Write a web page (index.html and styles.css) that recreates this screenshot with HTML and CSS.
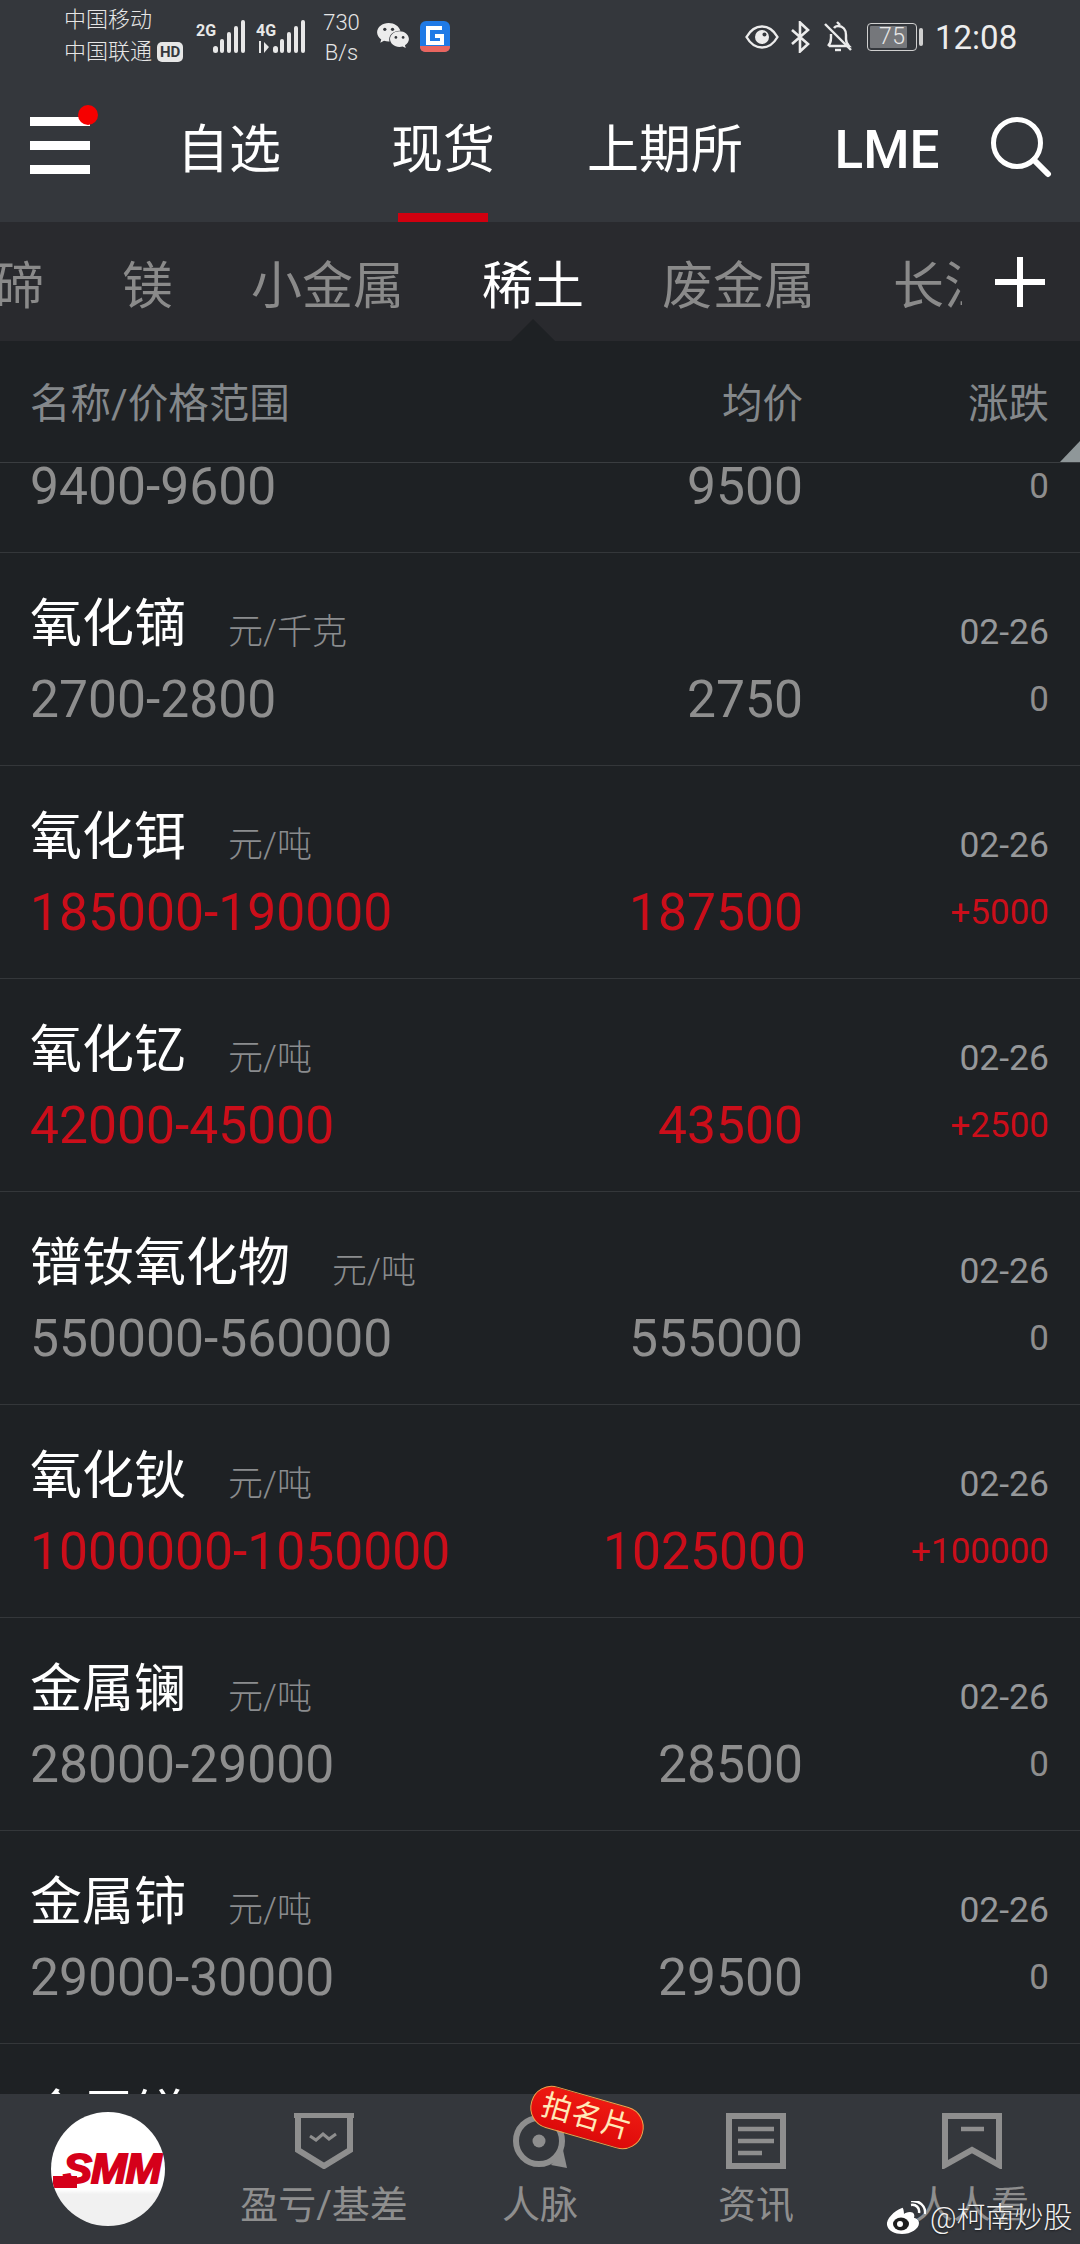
FILE: index.html
```html
<!DOCTYPE html>
<html lang="zh-CN">
<head>
<meta charset="utf-8">
<title>SMM 稀土</title>
<link rel="stylesheet" href="styles.css">
</head>
<body>
<div class="app">
  <header class="top">
    <div class="status">
      <div class="carriers">
        <div>中国移动</div>
        <div class="carrier2">中国联通<span class="hd">HD</span></div>
      </div>
      <svg class="signal" width="50" height="34" viewBox="0 0 50 34">
        <text x="0" y="16" class="net">2G</text>
        <g fill="#e8e8e8"><rect x="17" y="26" width="5" height="7" rx="2.5"/><rect x="24" y="19" width="4" height="14" rx="2"/><rect x="31" y="12" width="4" height="21" rx="2"/><rect x="38" y="6" width="4" height="27" rx="2"/><rect x="45" y="0" width="4" height="33" rx="2"/></g>
      </svg>
      <svg class="signal signal2" width="50" height="34" viewBox="0 0 50 34">
        <text x="0" y="16" class="net">4G</text>
        <g fill="#e8e8e8"><path d="M3 21v12h2V21zM8 33l5-6-5-5z"/><rect x="17" y="26" width="5" height="7" rx="2.5"/><rect x="24" y="19" width="4" height="14" rx="2"/><rect x="31" y="12" width="4" height="21" rx="2"/><rect x="38" y="6" width="4" height="27" rx="2"/><rect x="45" y="0" width="4" height="33" rx="2"/></g>
      </svg>
      <div class="speed"><div>730</div><div>B/s</div></div>
      <svg class="wechat" width="32" height="27" viewBox="0 0 33 28">
        <path fill="#ececec" d="M12 0C5.400 0 0 4.300 0 9.700c0 3 1.700 5.600 4.300 7.400L3.300 20.500l3.900-2c1.500.5 3 .8 4.800.8h.9a8 8 0 0 1-.3-2.200c0-5 4.800-9 10.800-9h.8C22.800 3.400 17.900 0 12 0z"/>
        <path fill="#ececec" d="M33 16.700c0-4.500-4.400-8.100-9.800-8.100s-9.800 3.600-9.800 8.100 4.400 8.100 9.800 8.100c1.200 0 2.300-.2 3.300-.5l3.200 1.700-.8-2.900c2.500-1.500 4.100-3.800 4.100-6.400z"/>
        <circle cx="8" cy="6.500" r="1.700" fill="#34373c"/><circle cx="16" cy="6.500" r="1.700" fill="#34373c"/><circle cx="19.500" cy="15" r="1.400" fill="#34373c"/><circle cx="27" cy="15" r="1.400" fill="#34373c"/>
      </svg>
      <svg class="gapp" width="30" height="31" viewBox="0 0 30 31">
        <rect width="30" height="31" rx="6" fill="#1f7ae6"/>
        <path d="M0 25h30v1a5 5 0 0 1-5 5H5a5 5 0 0 1-5-5z" fill="#e8655f"/>
        <path d="M22 7H8v15h14v-7h-7" fill="none" stroke="#fff" stroke-width="4"/>
      </svg>
      <div class="status-right">
        <svg class="eye" width="34" height="26" viewBox="0 0 34 26">
          <path d="M1.500 13C5.500 6 11 2.500 17 2.500S28.500 6 32.500 13C28.500 20 23 23.500 17 23.500S5.500 20 1.500 13z" fill="none" stroke="#ececec" stroke-width="2.400"/>
          <circle cx="17" cy="13" r="7" fill="#ececec"/><circle cx="19.500" cy="10.500" r="2" fill="#34373c"/>
        </svg>
        <svg class="bt" width="21" height="32" viewBox="0 0 21 32">
          <path d="M2 9l16 14-8 7.500V1.500l8 7.500L2 23" fill="none" stroke="#ececec" stroke-width="2.600"/>
        </svg>
        <svg class="bell" width="30" height="32" viewBox="0 0 30 32">
          <path d="M5 25c2-2 3-4 3-8v-4M11 7c1-1.500 2.500-2 4-2 5 0 8 3.500 8 9v4c0 3 1 5 3 7H6" fill="none" stroke="#ececec" stroke-width="2.400"/>
          <path d="M2 3l26 26" stroke="#ececec" stroke-width="2.400"/>
          <path d="M12 29h6" stroke="#ececec" stroke-width="2.400"/><path d="M14 1l3 3" stroke="#ececec" stroke-width="2.400"/>
        </svg>
        <div class="battery"><span class="battery-fill">75</span></div>
        <span class="battery-nub"></span>
        <span class="clock">12:08</span>
      </div>
    </div>
    <nav class="nav">
      <button class="menu" aria-label="菜单"><span></span><span></span><span></span><i class="menu-dot"></i></button>
      <a class="nav-item nav-a">自选</a>
      <a class="nav-item nav-b active">现货</a>
      <a class="nav-item nav-c">上期所</a>
      <a class="nav-item nav-d lme">LME</a>
      <svg class="search" width="62" height="62" viewBox="0 0 62 62">
        <circle cx="27" cy="27" r="23.500" fill="none" stroke="#fff" stroke-width="5"/>
        <path d="M44 44l14 14" stroke="#fff" stroke-width="6" stroke-linecap="round"/>
      </svg>
    </nav>
  </header>

  <section class="subtabs">
    <div class="strip">
      <a>碲</a><a>镁</a><a>小金属</a><a class="on">稀土</a><a>废金属</a><a>长江</a>
    </div>
    <svg class="plus" width="50" height="50" viewBox="0 0 50 50"><path d="M25 0v50M0 25h50" stroke="#fff" stroke-width="6"/></svg>
  </section>

  <div class="thead">
    <span class="th-name">名称/价格范围</span>
    <span class="th-avg">均价</span>
    <span class="th-chg">涨跌</span>
  </div>

  <main class="list">
    <article class="row row-clipped">
      <div class="range">9400-9600</div><div class="avg">9500</div><div class="chg">0</div>
    </article>
    <article class="row">
      <div class="name">氧化镝<small>元/千克</small></div><div class="date">02-26</div>
      <div class="range">2700-2800</div><div class="avg">2750</div><div class="chg">0</div>
    </article>
    <article class="row up">
      <div class="name">氧化铒<small>元/吨</small></div><div class="date">02-26</div>
      <div class="range">185000-190000</div><div class="avg">187500</div><div class="chg">+5000</div>
    </article>
    <article class="row up">
      <div class="name">氧化钇<small>元/吨</small></div><div class="date">02-26</div>
      <div class="range">42000-45000</div><div class="avg">43500</div><div class="chg">+2500</div>
    </article>
    <article class="row">
      <div class="name">镨钕氧化物<small>元/吨</small></div><div class="date">02-26</div>
      <div class="range">550000-560000</div><div class="avg">555000</div><div class="chg">0</div>
    </article>
    <article class="row up">
      <div class="name">氧化钬<small>元/吨</small></div><div class="date">02-26</div>
      <div class="range">1000000-1050000</div><div class="avg">1025000</div><div class="chg">+100000</div>
    </article>
    <article class="row">
      <div class="name">金属镧<small>元/吨</small></div><div class="date">02-26</div>
      <div class="range">28000-29000</div><div class="avg">28500</div><div class="chg">0</div>
    </article>
    <article class="row">
      <div class="name">金属铈<small>元/吨</small></div><div class="date">02-26</div>
      <div class="range">29000-30000</div><div class="avg">29500</div><div class="chg">0</div>
    </article>
    <article class="row">
      <div class="name">金属镁</div>
    </article>
  </main>

  <footer class="tabbar">
    <div class="tab tab-logo"><div class="logo"><span class="smm">SMM</span></div></div>
    <div class="tab">
      <svg class="tab-icon" width="62" height="56" viewBox="0 0 62 56">
        <path d="M1 0h60v5H1z" fill="#8e8e8e"/>
        <path d="M5 4v33l26 16 26-16V4" fill="none" stroke="#8e8e8e" stroke-width="6"/>
        <path d="M17 23l6 4 7-6 6 5 7-5" fill="none" stroke="#8e8e8e" stroke-width="3"/>
      </svg>
      <span>盈亏/基差</span>
    </div>
    <div class="tab tab-people">
      <svg class="tab-icon" width="62" height="56" viewBox="0 0 62 56">
        <circle cx="30" cy="28" r="23" fill="none" stroke="#8e8e8e" stroke-width="6"/>
        <path d="M42 52l16 3-4-18z" fill="#8e8e8e"/>
        <circle cx="30" cy="28" r="6.500" fill="#8e8e8e"/>
      </svg>
      <span>人脉</span>
      <div class="badge">拍名片</div>
    </div>
    <div class="tab">
      <svg class="tab-icon" width="62" height="56" viewBox="0 0 62 56">
        <rect x="4" y="3" width="54" height="50" fill="none" stroke="#8e8e8e" stroke-width="6"/>
        <path d="M13 16h36M13 28h36M13 40h24" stroke="#8e8e8e" stroke-width="4.500"/>
      </svg>
      <span>资讯</span>
    </div>
    <div class="tab">
      <svg class="tab-icon" width="62" height="56" viewBox="0 0 62 56">
        <path d="M4 52V3h54v49L31 37z" fill="none" stroke="#8e8e8e" stroke-width="6"/>
        <path d="M20 16h23" stroke="#8e8e8e" stroke-width="4.500"/>
      </svg>
      <span>人人看</span>
    </div>
    <div class="watermark">
      <svg width="40" height="34" viewBox="0 0 40 34">
        <path d="M16 7C8 10 0 18 1 24c1 6 8 9 15 9 9 0 17-5 17-11 0-4-4-5-5-5 1-3 0-6-4-6-3 0-5 1-6 2 0-3-1-7-2-6z" fill="#fff"/>
        <ellipse cx="15" cy="23" rx="8" ry="6.500" fill="#1d1d1d"/><circle cx="14" cy="23" r="3" fill="#fff"/>
        <path d="M25 4c5-1 9 3 8 8M25 0c8-1 15 5 14 13" fill="none" stroke="#fff" stroke-width="2.500"/>
      </svg>
      <span>@柯南炒股</span>
    </div>
  </footer>
</div>
</body>
</html>
```
FILE: styles.css
```css
* { box-sizing: border-box; margin: 0; padding: 0; }
html, body { width: 1080px; height: 2244px; overflow: hidden; }
body {
  background: #1e2124;
  font-family: Roboto, "Noto Sans CJK SC", sans-serif;
  color: #8e8e8e;
}
.app { display: flex; flex-direction: column; height: 2244px; }

/* top */
.top { background: #34373c; height: 222px; flex: none; }
.status {
  height: 80px;
  display: flex;
  align-items: flex-start;
  padding-left: 64px;
  color: #e6e6e6;
}
.carriers { width: 132px; padding-top: 4px; font-size: 22px; line-height: 32px; font-weight: 300; }
.carrier2 { display: flex; align-items: center; white-space: nowrap; }
.hd {
  background: #e6e6e6; color: #34373c; font-size: 15px; font-weight: 700;
  line-height: 20px; height: 20px; border-radius: 5px; padding: 0 3px; margin-left: 5px;
}
.signal { margin-top: 20px; flex: none; }
.signal2 { margin-left: 10px; }
.net { font: 700 16px "Liberation Sans Narrow", Roboto, sans-serif; fill: #e8e8e8; }
.speed { width: 71px; padding-top: 8px; text-align: center; font-size: 22px; line-height: 30px; font-weight: 300; }
.wechat { margin-top: 23px; flex: none; }
.gapp { margin: 21px 0 0 11px; flex: none; }
.status-right { margin-left: 295px; display: flex; align-items: center; height: 74px; }
.eye { flex: none; }
.bt { margin-left: 11px; flex: none; }
.bell { margin-left: 12px; flex: none; }
.battery {
  margin-left: 14px; width: 50px; height: 28px; border: 1.500px solid #cfcfcf; border-radius: 4px; padding: 2px;
}
.battery-fill {
  display: block; height: 100%; width: 37px; background: #75777b; color: #e8e8e8;
  font-size: 23px; line-height: 21px; font-weight: 300; padding-left: 9px; letter-spacing: .5px; border-radius: 1px;
}
.battery-nub { width: 4px; height: 18px; background: #cfcfcf; border-radius: 2px; margin-left: 2px; }
.clock { margin-left: 12px; font-size: 33px; font-weight: 400; color: #ececec; }

.nav { height: 142px; display: flex; align-items: stretch; position: relative; }
.menu {
  flex: none; width: 122px; background: none; border: 0; position: relative;
  display: flex; flex-direction: column; gap: 15px; padding: 37px 0 0 30px;
}
.menu span { display: block; width: 60px; height: 9px; background: #fff; }
.menu-dot {
  position: absolute; left: 78px; top: 25px; width: 20px; height: 20px; border-radius: 50%; background: #f60000;
}
.nav-item {
  color: #fff; font-size: 52px; text-align: center; line-height: 66px;
  padding-top: 38px; position: relative;
}
.nav-a, .nav-b { width: 214px; }
.nav-c { width: 230px; }
.nav-d { width: 214px; }
.lme { font-weight: 500; font-size: 53px; line-height: 64px; }
.nav-item.active::after {
  content: ""; position: absolute; left: 62px; right: 62px; bottom: 0; height: 9px; background: #d0000f;
}
.search { margin-top: 36px; margin-left: -4px; flex: none; }

/* sub tabs */
.subtabs {
  flex: none; height: 119px; background: #292a2e; display: flex; position: relative;
}
.strip {
  width: 962px; overflow: hidden; display: flex; gap: 78px;
  font-size: 51px; line-height: 129px; white-space: nowrap; color: #8a8a8a;
}
.strip a { flex: none; position: relative; height: 119px; }
.strip a:first-child { margin-left: -7px; }
.strip .on { color: #fff; }
.strip .on::after {
  content: ""; position: absolute; left: 50%; bottom: 0; margin-left: -22px;
  width: 44px; height: 22px; background: #1e2124; clip-path: polygon(50% 0, 100% 100%, 0 100%);
}
.plus { margin: 35px 0 0 33px; flex: none; }

/* table head */
.thead {
  flex: none; height: 122px; display: grid; grid-template-columns: 1fr 200px 246px;
  padding: 6px 31px 0 30px; align-items: center; font-size: 40.500px; color: #84888b;
  border-bottom: 1px solid #3a3d40; position: relative; line-height: 1;
}
.th-avg, .th-chg { text-align: right; }
.thead::after {
  content: ""; position: absolute; right: 0; bottom: 0; width: 20px; height: 21px;
  background: #8f9799; clip-path: polygon(100% 0, 100% 100%, 0 100%);
}

/* rows */
.list { flex: 1; overflow: hidden; min-height: 0; }
.row {
  height: 213px; display: grid;
  grid-template-columns: 1fr 200px 246px;
  grid-template-rows: 75px 70px;
  grid-template-areas: "name name date" "range avg chg";
  padding: 37px 31px 0 30px;
  border-bottom: 1px solid #34373a;
  align-items: center;
}
.row-clipped { margin-top: -123px; }
.name { grid-area: name; align-self: start; color: #fff; font-size: 52px; display: flex; line-height: 70px; }
.name small { align-self: flex-end; font-size: 35px; line-height: 41px; color: #8a8c8e; margin: 0 0 7px 42px; font-weight: 300; }
.date { grid-area: date; align-self: start; text-align: right; font-size: 35.500px; line-height: 40px; color: #96989a; padding-top: 22px; }
.range { grid-area: range; font-size: 51.600px; line-height: 70px; white-space: nowrap; }
.avg { grid-area: avg; font-size: 51.600px; line-height: 70px; text-align: right; white-space: nowrap; }
.chg { grid-area: chg; font-size: 35px; line-height: 68px; text-align: right; white-space: nowrap; }
.up .range, .up .avg, .up .chg { color: #cb0e1a; }

/* tabbar */
.tabbar {
  flex: none; height: 150px; background: #34373c; display: grid;
  grid-template-columns: repeat(5, 216px); position: relative;
}
.tab {
  position: relative; display: flex; flex-direction: column; align-items: center;
  padding-top: 19px; font-size: 38px; color: #8e8e8e; line-height: 50px;
}
.tab-icon { display: block; margin-bottom: 11px; }
.tab-logo { padding-top: 18px; }
.logo {
  width: 114px; height: 114px; border-radius: 50%;
  background: linear-gradient(#fff 68%, #f1f1f1 72%);
  display: flex; align-items: center; justify-content: center; overflow: hidden;
}
.smm {
  position: relative; color: #d5001a; font: italic 900 43px/31px "Liberation Sans", sans-serif; letter-spacing: -1px;
  -webkit-text-stroke: 2px #d5001a; margin: -2px 0 0 8px;
}
.smm::before {
  content: ""; position: absolute; left: -10px; bottom: -4px; width: 24px; height: 12px; background: #d5001a;
}
.badge {
  position: absolute; left: 97px; top: 2px; width: 116px; height: 43px;
  transform: rotate(16deg);
  background: linear-gradient(#ee1a12, #dd0a0a); border: 1.500px solid #f5a34a; border-radius: 21px;
  color: #ffe9b8; font-size: 30px; line-height: 39px; text-align: center; letter-spacing: 1px; white-space: nowrap;
}
.watermark {
  position: absolute; left: 886px; top: 106px; display: flex; align-items: center; gap: 4px;
  color: #f2f2f2; font-size: 29px; line-height: 36px; font-weight: 300; white-space: nowrap;
  text-shadow: 0 1px 2px rgba(0,0,0,.5);
}
```
